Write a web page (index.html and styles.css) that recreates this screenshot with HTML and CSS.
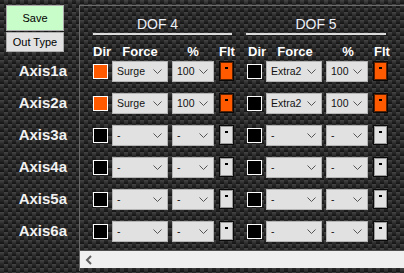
FILE: index.html
```html
<!DOCTYPE html>
<html lang="en">
<head>
  <meta charset="UTF-8">
  <meta name="viewport" content="width=device-width, initial-scale=1.0">
  <title>Axis Output Mapping</title>
  <link rel="stylesheet" href="styles.css">
</head>
<body>

<div class="side">
  <button class="btn btn-save">Save</button>
  <button class="btn">Out Type</button>
  <div class="axis-label">Axis1a</div>
  <div class="axis-label">Axis2a</div>
  <div class="axis-label">Axis3a</div>
  <div class="axis-label">Axis4a</div>
  <div class="axis-label">Axis5a</div>
  <div class="axis-label">Axis6a</div>
</div>

<div class="panel">
  <div class="panel-body">
    <div class="titles">
      <div class="dof-title first">DOF 4</div>
      <div class="dof-title">DOF 5</div>
    </div>

    <div class="col-heads">
      <div class="group">
        <span class="h-left">Dir</span><span class="h-mid">Force</span><span class="h-mid">%</span><span class="h-left">Flt</span>
      </div>
      <div class="group">
        <span class="h-left">Dir</span><span class="h-mid">Force</span><span class="h-mid">%</span><span class="h-left">Flt</span>
      </div>
    </div>

    <!-- row 1 -->
    <div class="row">
      <div class="group">
        <span class="dir on"></span>
        <div class="combo"><span>Surge</span><svg width="9" height="5"><polyline points="0.5,0.5 4.5,4.5 8.5,0.5"/></svg></div>
        <div class="combo"><span>100</span><svg width="9" height="5"><polyline points="0.5,0.5 4.5,4.5 8.5,0.5"/></svg></div>
        <span class="flt on"><i></i></span>
      </div>
      <div class="group">
        <span class="dir"></span>
        <div class="combo"><span>Extra2</span><svg width="9" height="5"><polyline points="0.5,0.5 4.5,4.5 8.5,0.5"/></svg></div>
        <div class="combo"><span>100</span><svg width="9" height="5"><polyline points="0.5,0.5 4.5,4.5 8.5,0.5"/></svg></div>
        <span class="flt on"><i></i></span>
      </div>
    </div>

    <!-- row 2 -->
    <div class="row">
      <div class="group">
        <span class="dir on"></span>
        <div class="combo"><span>Surge</span><svg width="9" height="5"><polyline points="0.5,0.5 4.5,4.5 8.5,0.5"/></svg></div>
        <div class="combo"><span>100</span><svg width="9" height="5"><polyline points="0.5,0.5 4.5,4.5 8.5,0.5"/></svg></div>
        <span class="flt on"><i></i></span>
      </div>
      <div class="group">
        <span class="dir"></span>
        <div class="combo"><span>Extra2</span><svg width="9" height="5"><polyline points="0.5,0.5 4.5,4.5 8.5,0.5"/></svg></div>
        <div class="combo"><span>100</span><svg width="9" height="5"><polyline points="0.5,0.5 4.5,4.5 8.5,0.5"/></svg></div>
        <span class="flt on"><i></i></span>
      </div>
    </div>

    <!-- row 3 -->
    <div class="row">
      <div class="group">
        <span class="dir"></span>
        <div class="combo"><span>-</span><svg width="9" height="5"><polyline points="0.5,0.5 4.5,4.5 8.5,0.5"/></svg></div>
        <div class="combo"><span>-</span><svg width="9" height="5"><polyline points="0.5,0.5 4.5,4.5 8.5,0.5"/></svg></div>
        <span class="flt"><i></i></span>
      </div>
      <div class="group">
        <span class="dir"></span>
        <div class="combo"><span>-</span><svg width="9" height="5"><polyline points="0.5,0.5 4.5,4.5 8.5,0.5"/></svg></div>
        <div class="combo"><span>-</span><svg width="9" height="5"><polyline points="0.5,0.5 4.5,4.5 8.5,0.5"/></svg></div>
        <span class="flt"><i></i></span>
      </div>
    </div>

    <!-- row 4 -->
    <div class="row">
      <div class="group">
        <span class="dir"></span>
        <div class="combo"><span>-</span><svg width="9" height="5"><polyline points="0.5,0.5 4.5,4.5 8.5,0.5"/></svg></div>
        <div class="combo"><span>-</span><svg width="9" height="5"><polyline points="0.5,0.5 4.5,4.5 8.5,0.5"/></svg></div>
        <span class="flt"><i></i></span>
      </div>
      <div class="group">
        <span class="dir"></span>
        <div class="combo"><span>-</span><svg width="9" height="5"><polyline points="0.5,0.5 4.5,4.5 8.5,0.5"/></svg></div>
        <div class="combo"><span>-</span><svg width="9" height="5"><polyline points="0.5,0.5 4.5,4.5 8.5,0.5"/></svg></div>
        <span class="flt"><i></i></span>
      </div>
    </div>

    <!-- row 5 -->
    <div class="row">
      <div class="group">
        <span class="dir"></span>
        <div class="combo"><span>-</span><svg width="9" height="5"><polyline points="0.5,0.5 4.5,4.5 8.5,0.5"/></svg></div>
        <div class="combo"><span>-</span><svg width="9" height="5"><polyline points="0.5,0.5 4.5,4.5 8.5,0.5"/></svg></div>
        <span class="flt"><i></i></span>
      </div>
      <div class="group">
        <span class="dir"></span>
        <div class="combo"><span>-</span><svg width="9" height="5"><polyline points="0.5,0.5 4.5,4.5 8.5,0.5"/></svg></div>
        <div class="combo"><span>-</span><svg width="9" height="5"><polyline points="0.5,0.5 4.5,4.5 8.5,0.5"/></svg></div>
        <span class="flt"><i></i></span>
      </div>
    </div>

    <!-- row 6 -->
    <div class="row">
      <div class="group">
        <span class="dir"></span>
        <div class="combo"><span>-</span><svg width="9" height="5"><polyline points="0.5,0.5 4.5,4.5 8.5,0.5"/></svg></div>
        <div class="combo"><span>-</span><svg width="9" height="5"><polyline points="0.5,0.5 4.5,4.5 8.5,0.5"/></svg></div>
        <span class="flt"><i></i></span>
      </div>
      <div class="group">
        <span class="dir"></span>
        <div class="combo"><span>-</span><svg width="9" height="5"><polyline points="0.5,0.5 4.5,4.5 8.5,0.5"/></svg></div>
        <div class="combo"><span>-</span><svg width="9" height="5"><polyline points="0.5,0.5 4.5,4.5 8.5,0.5"/></svg></div>
        <span class="flt"><i></i></span>
      </div>
    </div>
  </div>

  <div class="hscroll">
    <svg class="arrow" width="8" height="10"><polyline points="6,1 2,5 6,9"/></svg>
  </div>
</div>

</body>
</html>
```

FILE: styles.css
```css
html, body {
  margin: 0;
  padding: 0;
}
body {
  width: 404px;
  height: 273px;
  overflow: hidden;
  display: flex;
  font-family: "Liberation Sans", Arial, sans-serif;
  background-color: #202020;
  background-image:
    repeating-linear-gradient(180deg, rgba(255,255,255,0.07) 0, rgba(0,0,0,0.30) 4px),
    conic-gradient(#383838 25%, #1b1b1b 0 50%, #383838 0 75%, #1b1b1b 0);
  background-size: 8px 8px, 8px 8px;
}

/* left side: buttons + axis names */
.side {
  width: 79px;
  flex: none;
  display: flex;
  flex-direction: column;
  padding-top: 5px;
  box-sizing: border-box;
}
.btn {
  margin: 0 0 1px 6px;
  width: 58px;
  height: 20px;
  padding: 0;
  font-family: inherit;
  font-size: 11px;
  color: #000;
  background-color: #e1e1e1;
  border: 1px solid #adadad;
}
.btn-save {
  height: 26px;
  background-color: #c8fcc8;
}
.axis-label {
  height: 32px;
  line-height: 32px;
  text-align: right;
  padding-right: 12px;
  color: #f2f2f2;
  font-weight: bold;
  font-size: 15px;
}
.axis-label:first-of-type {
  margin-top: 2px;
}

/* scrolling panel */
.panel {
  flex: 1;
  margin-top: 5px;
  height: 265px;
  display: flex;
  flex-direction: column;
  border-left: 1px solid #6a6a6a;
  border-top: 1px solid #6a6a6a;
}
.panel-body {
  flex: 1;
  padding-left: 13px;
}
.titles {
  display: flex;
  gap: 14px;
  padding-top: 10px;
}
.dof-title {
  width: 140px;
  text-align: center;
  font-size: 14px;
  line-height: 16px;
  color: #eef0f8;
  padding-bottom: 1px;
  border-bottom: 2px solid #dcdcdc;
}
.dof-title.first {
  width: 139px;
  text-indent: -10px;
}
.col-heads {
  display: flex;
  gap: 15px;
  margin-top: 9px;
  margin-bottom: -5px;
  height: 16px;
  line-height: 16px;
  color: #fff;
  font-weight: bold;
  font-size: 13px;
}
.group {
  display: grid;
  grid-template-columns: 15px 56px 42px 15px;
  column-gap: 4px;
  align-items: center;
}
.group > :last-child {
  margin-left: 1px;
}
.h-left {
  white-space: nowrap;
}
.h-mid {
  text-align: center;
}
.row {
  display: flex;
  gap: 14px;
  height: 32px;
}

.dir {
  width: 15px;
  height: 15px;
  box-sizing: border-box;
  border: 1px solid #fff;
  background-color: #000;
}
.dir.on {
  background-color: #ff5a00;
}
.combo {
  height: 21px;
  box-sizing: border-box;
  border: 1px solid #b4b4b4;
  background-color: #e1e1e1;
  display: flex;
  align-items: center;
  justify-content: space-between;
  padding: 0 5px 0 4px;
  font-size: 10.5px;
  color: #111;
}
.combo svg polyline {
  fill: none;
  stroke: #555;
  stroke-width: 1;
}
.flt {
  width: 15px;
  height: 20px;
  box-sizing: border-box;
  border: 1px solid #0a0a0a;
  background-color: #e1e1e1;
  box-shadow: inset 0 0 0 1px #9a9a9a;
  display: flex;
  justify-content: center;
  padding-top: 5px;
}
.flt.on {
  background-color: #ff5a00;
  box-shadow: inset 0 0 0 1px #5a2000;
}
.flt i {
  display: block;
  width: 3px;
  height: 2px;
  background-color: #000;
}

.hscroll {
  height: 17px;
  margin-bottom: 3px;
  background-color: #f0f0f0;
  border-top: 1px solid #505050;
  display: flex;
  align-items: center;
  padding-left: 5px;
}
.arrow polyline {
  fill: none;
  stroke: #606060;
  stroke-width: 2;
}
```
